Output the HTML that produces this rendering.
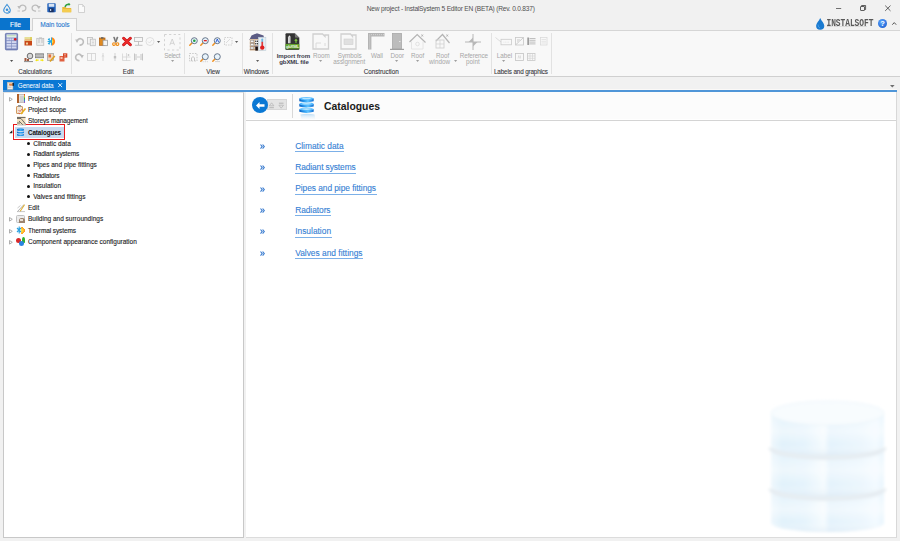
<!DOCTYPE html>
<html><head><meta charset="utf-8">
<style>
*{margin:0;padding:0;box-sizing:border-box}
html,body{width:900px;height:541px;overflow:hidden;background:#f1f1f1;font-family:"Liberation Sans",sans-serif;position:relative}
.a{position:absolute}
.t{position:absolute;white-space:nowrap;line-height:1}
svg{position:absolute;overflow:visible}
</style></head><body>

<div class="t" style="left:366.7px;top:5.77px;font-size:6.6px;color:#505050;font-weight:normal;letter-spacing:-0.2px">New project - InstalSystem 5 Editor EN (BETA) (Rev. 0.0.837)</div>
<svg style="left:835px;top:4px" width="60" height="9"><path d="M1 4.5H6.2" stroke="#444" stroke-width="0.75"/><rect x="25.5" y="2.5" width="4" height="4" rx="0.4" fill="none" stroke="#3a3a3a" stroke-width="0.8"/><path d="M26.6 2.3V1.5H30.6V5.5H29.7" fill="none" stroke="#3a3a3a" stroke-width="0.8"/><path d="M50.2 1.6L55.5 6.9M55.5 1.6L50.2 6.9" stroke="#333" stroke-width="0.75"/></svg>
<div class="a" style="left:0;top:18px;width:30px;height:12.5px;background:#0a74cd"></div>
<div class="t" style="left:10px;top:21.87px;font-size:6.6px;color:#ffffff;font-weight:normal;-webkit-text-stroke:0.12px #ffffff;letter-spacing:0.1px">File</div>
<div class="a" style="left:32px;top:18px;width:45px;height:13px;background:#f8f8f8;border:1px solid #d2d2d2;border-bottom:none"></div>
<div class="t" style="left:40.3px;top:21.77px;font-size:6.6px;color:#2a78d0;font-weight:normal;-webkit-text-stroke:0.1px #2a78d0;letter-spacing:-0.08px">Main tools</div>
<div class="a" style="left:0;top:30px;width:900px;height:47px;background:#f8f8f8;border-top:1px solid #d6d6d6;border-bottom:1px solid #d0d0d0"></div>
<div class="a" style="left:33px;top:30px;width:43px;height:1.5px;background:#f8f8f8"></div>
<div class="a" style="left:71.2px;top:33px;width:1px;height:41px;background:#e2e2e2"></div>
<div class="a" style="left:184.2px;top:33px;width:1px;height:41px;background:#e2e2e2"></div>
<div class="a" style="left:241.5px;top:33px;width:1px;height:41px;background:#e2e2e2"></div>
<div class="a" style="left:271.5px;top:33px;width:1px;height:41px;background:#e2e2e2"></div>
<div class="a" style="left:491px;top:33px;width:1px;height:41px;background:#e2e2e2"></div>
<div class="a" style="left:551.3px;top:33px;width:1px;height:41px;background:#e2e2e2"></div>
<div class="a" style="left:3px;top:80px;width:63px;height:11px;background:#0a78d4"></div>
<div class="t" style="left:17.8px;top:82.66px;font-size:6.4px;color:#ffffff;font-weight:normal;letter-spacing:-0.1px">General data</div>
<svg style="left:58px;top:83.4px" width="4.3" height="4.3"><path d="M0.2 0.2L4.1 4.1M4.1 0.2L0.2 4.1" stroke="#fff" stroke-width="0.85"/></svg>
<div class="a" style="left:66px;top:89px;width:831px;height:1px;background:#fbf9f7"></div>
<div class="a" style="left:3px;top:90px;width:894px;height:2px;background:#5096d8"></div>
<svg style="left:890.2px;top:85.1px" width="4.6" height="2.4"><path d="M0 0H4.6L2.3 2.4Z" fill="#6e6e6e"/></svg>
<div class="a" style="left:3px;top:92px;width:241px;height:446px;background:#fff;border:1px solid #c8c8c8;border-top:1px solid #e4e4e4"></div>
<div class="a" style="left:246px;top:92px;width:651px;height:446px;background:#fff;border-right:1px solid #d8d8d8;border-bottom:1px solid #dcdcdc"></div>
<div class="a" style="left:246px;top:92px;width:650px;height:27px;background:#fcfcfc"></div>
<div class="a" style="left:246px;top:120px;width:650px;height:1px;background:#d4d4d4"></div>
<div class="a" style="left:15px;top:126.5px;width:48.5px;height:11px;background:#c8daee"></div>
<div class="a" style="left:13px;top:124px;width:52px;height:15.5px;border:1.6px solid #e8191c"></div>
<div class="t" style="left:28px;top:96.22px;font-size:6.5px;color:#1c1c24;font-weight:normal;-webkit-text-stroke:0.12px #1c1c24;letter-spacing:0px">Project info</div>
<svg style="left:9px;top:97.2px" width="4" height="5"><path d="M0.5 0.5L3.3 2.3L0.5 4.1Z" fill="none" stroke="#9a9a9a" stroke-width="0.8"/></svg>
<div class="t" style="left:28px;top:107.22px;font-size:6.5px;color:#1c1c24;font-weight:normal;-webkit-text-stroke:0.12px #1c1c24;letter-spacing:-0.1px">Project scope</div>
<div class="t" style="left:28px;top:118.41px;font-size:6.5px;color:#1c1c24;font-weight:normal;-webkit-text-stroke:0.12px #1c1c24;letter-spacing:-0.12px">Storeys management</div>
<div class="t" style="left:28px;top:129.81px;font-size:6.3px;color:#111;font-weight:bold;letter-spacing:-0.1px">Catalogues</div>
<svg style="left:9px;top:129.9px" width="4" height="4"><path d="M3.3 0.2V3.3H0.2Z" fill="#222"/></svg>
<div class="t" style="left:28px;top:204.91px;font-size:6.5px;color:#1c1c24;font-weight:normal;-webkit-text-stroke:0.12px #1c1c24;letter-spacing:0px">Edit</div>
<div class="t" style="left:28px;top:216.12px;font-size:6.5px;color:#1c1c24;font-weight:normal;-webkit-text-stroke:0.12px #1c1c24;letter-spacing:0px">Building and surroundings</div>
<svg style="left:9px;top:217.1px" width="4" height="5"><path d="M0.5 0.5L3.3 2.3L0.5 4.1Z" fill="none" stroke="#9a9a9a" stroke-width="0.8"/></svg>
<div class="t" style="left:28px;top:227.51px;font-size:6.5px;color:#1c1c24;font-weight:normal;-webkit-text-stroke:0.12px #1c1c24;letter-spacing:-0.11px">Thermal systems</div>
<svg style="left:9px;top:228.5px" width="4" height="5"><path d="M0.5 0.5L3.3 2.3L0.5 4.1Z" fill="none" stroke="#9a9a9a" stroke-width="0.8"/></svg>
<div class="t" style="left:28px;top:238.62px;font-size:6.5px;color:#1c1c24;font-weight:normal;-webkit-text-stroke:0.12px #1c1c24;letter-spacing:0px">Component appearance configuration</div>
<svg style="left:9px;top:239.6px" width="4" height="5"><path d="M0.5 0.5L3.3 2.3L0.5 4.1Z" fill="none" stroke="#9a9a9a" stroke-width="0.8"/></svg>
<div class="a" style="left:27.3px;top:142.2px;width:3.1px;height:3.1px;border-radius:50%;background:#111"></div>
<div class="t" style="left:33.2px;top:140.62px;font-size:6.5px;color:#1c1c24;font-weight:normal;-webkit-text-stroke:0.12px #1c1c24;letter-spacing:0px">Climatic data</div>
<div class="a" style="left:27.3px;top:152.6px;width:3.1px;height:3.1px;border-radius:50%;background:#111"></div>
<div class="t" style="left:33.2px;top:151.01px;font-size:6.5px;color:#1c1c24;font-weight:normal;-webkit-text-stroke:0.12px #1c1c24;letter-spacing:-0.14px">Radiant systems</div>
<div class="a" style="left:27.3px;top:163.6px;width:3.1px;height:3.1px;border-radius:50%;background:#111"></div>
<div class="t" style="left:33.2px;top:162.01px;font-size:6.5px;color:#1c1c24;font-weight:normal;-webkit-text-stroke:0.12px #1c1c24;letter-spacing:0px">Pipes and pipe fittings</div>
<div class="a" style="left:27.3px;top:174.1px;width:3.1px;height:3.1px;border-radius:50%;background:#111"></div>
<div class="t" style="left:33.2px;top:172.51px;font-size:6.5px;color:#1c1c24;font-weight:normal;-webkit-text-stroke:0.12px #1c1c24;letter-spacing:-0.2px">Radiators</div>
<div class="a" style="left:27.3px;top:184.7px;width:3.1px;height:3.1px;border-radius:50%;background:#111"></div>
<div class="t" style="left:33.2px;top:183.12px;font-size:6.5px;color:#1c1c24;font-weight:normal;-webkit-text-stroke:0.12px #1c1c24;letter-spacing:0px">Insulation</div>
<div class="a" style="left:27.3px;top:195.4px;width:3.1px;height:3.1px;border-radius:50%;background:#111"></div>
<div class="t" style="left:33.2px;top:193.81px;font-size:6.5px;color:#1c1c24;font-weight:normal;-webkit-text-stroke:0.12px #1c1c24;letter-spacing:0px">Valves and fittings</div>
<div class="a" style="left:17px;top:94px;width:8px;height:8.6px;background:#e8e4e0;border:1px solid #c7c2bc"></div>
<div class="a" style="left:17px;top:94px;width:2px;height:8.6px;background:#b0602a"></div>
<div class="a" style="left:19.5px;top:95.5px;width:4px;height:6px;background:#d0d0d0"></div>
<div class="a" style="left:24px;top:94px;width:1px;height:8.6px;background:linear-gradient(#e03030,#f0c020,#30b040,#3080e0,#c040c0)"></div>
<div class="a" style="left:16px;top:106.1px;width:7px;height:7.6px;background:#f3e6d4;border:1px solid #d29a60;border-radius:1px"></div>
<div class="a" style="left:18px;top:105.3px;width:3px;height:1.6px;background:#999"></div>
<svg style="left:16.5px;top:106.8px" width="9" height="8"><path d="M1.5 3L3 4.5L5 2M1.5 6L3 7" stroke="#d04040" stroke-width="0.7" fill="none"/><path d="M4 7L8.5 1.5" stroke="#e8b020" stroke-width="1.6"/></svg>
<svg style="left:16.5px;top:116.4px" width="9" height="9"><rect x="0" y="0.5" width="8.5" height="8.5" fill="#f0e0c0"/><path d="M0 1.5L8.5 1.5M0 2.5L4 2.5L8.5 8M2 5L6 9M0 7H3" stroke="#505050" stroke-width="0.8" fill="none"/><path d="M0 9H9" stroke="#aaa" stroke-width="0.7"/></svg>
<svg style="left:17.3px;top:128.3px" width="7" height="8.5" viewBox="0 0 7 8.5"><defs><linearGradient id="tdb" x1="0" x2="1"><stop offset="0" stop-color="#0b6bd0"/><stop offset="0.5" stop-color="#3aaaf2"/><stop offset="1" stop-color="#1480e0"/></linearGradient></defs><path d="M0 0.9Q3.5 -0.5 7 0.9V2.4Q3.5 3.6 0 2.4Z" fill="url(#tdb)"/><path d="M0 3.5Q3.5 4.7 7 3.5V5Q3.5 6.2 0 5Z" fill="url(#tdb)"/><path d="M0 6.1Q3.5 7.3 7 6.1V7.4Q3.5 8.8 0 7.4Z" fill="url(#tdb)"/></svg>
<svg style="left:17px;top:204px" width="8" height="8"><path d="M0.5 7.5L7 0.5" stroke="#9a9a9a" stroke-width="0.8"/><path d="M3 7.5L7.5 0.8" stroke="#e0b030" stroke-width="1.1"/><path d="M0.5 4L3.5 1.5M0 7.6H8" stroke="#b0b0b0" stroke-width="0.7"/></svg>
<div class="a" style="left:16.3px;top:214.6px;width:8.7px;height:8.9px;background:#ececec;border:1px solid #c0c0c0;border-radius:1.5px"></div>
<div class="a" style="left:18.6px;top:217.6px;width:6px;height:5.5px;background:#9c8470;border-radius:2.5px 2.5px 0 0"></div>
<div class="a" style="left:20.4px;top:219.1px;width:2.5px;height:2px;background:#e8e0d8"></div>
<div class="a" style="left:20.5px;top:226.5px;width:4px;height:7.6px;background:radial-gradient(circle at 0% 50%,#ffe040 20%,#ff9a20 70%,#fff0 72%)"></div>
<svg style="left:17px;top:226.2px" width="5" height="8"><path d="M2.2 0.5V7.5M0 2L4 6M0 6L4 2" stroke="#2aa0e0" stroke-width="1.1"/></svg>
<div class="a" style="left:16px;top:237.8px;width:5px;height:5px;background:#d82a2a;border-radius:50%"></div>
<div class="a" style="left:21.5px;top:237.3px;width:3px;height:6px;background:#30b030;border-radius:50% 50% 20% 20%"></div>
<div class="a" style="left:18.5px;top:240.8px;width:5.5px;height:5px;background:#2a84e0;border-radius:50%"></div>
<div class="a" style="left:267px;top:99.2px;width:20px;height:11px;background:#e4e4e4;border:1px solid #d6d6d6"></div>
<svg style="left:269px;top:101.5px" width="16" height="7"><path d="M2.6 0.8L4.9 3.8H0.3Z" fill="none" stroke="#b4b4b4" stroke-width="0.75"/><path d="M0.3 5.7H4.9" stroke="#b4b4b4" stroke-width="1"/><path d="M12.2 6.2L14.5 3.2H9.9Z" fill="none" stroke="#b4b4b4" stroke-width="0.75"/><path d="M9.9 1.2H14.5" stroke="#b4b4b4" stroke-width="1"/></svg>
<div class="a" style="left:252px;top:97px;width:16px;height:16px;background:#0a78d4;border-radius:50%"></div>
<svg style="left:254.6px;top:100.6px" width="11" height="9"><path d="M1 4.5L4.5 1V3.3H9.5V5.7H4.5V8Z" fill="#fff"/></svg>
<div class="a" style="left:292px;top:94px;width:1px;height:24px;background:#d8d8d8"></div>
<div class="t" style="left:324px;top:101.90px;font-size:10.4px;color:#1a1a1a;font-weight:bold;">Catalogues</div>
<svg style="left:299px;top:96.7px" width="17" height="25" viewBox="0 0 17 25"><defs><linearGradient id="hdb" x1="0" x2="1"><stop offset="0" stop-color="#0a5ec0"/><stop offset="0.35" stop-color="#2a9cf0"/><stop offset="0.6" stop-color="#60c4ff"/><stop offset="1" stop-color="#0c6ad0"/></linearGradient><linearGradient id="hrf" x1="0" x2="0" y1="0" y2="1"><stop offset="0" stop-color="#a8d4f4"/><stop offset="1" stop-color="#ffffff" stop-opacity="0"/></linearGradient></defs><path d="M0.3 12.2V14.8Q7.5 17.0 14.7 14.8V12.2Z" fill="url(#hdb)"/><ellipse cx="7.5" cy="12.2" rx="7.2" ry="1.5" fill="#58bcff"/><ellipse cx="7.5" cy="12.1" rx="4.5" ry="0.8" fill="#b8e6ff"/><path d="M0.3 6.9V9.5Q7.5 11.7 14.7 9.5V6.9Z" fill="url(#hdb)"/><ellipse cx="7.5" cy="6.9" rx="7.2" ry="1.5" fill="#58bcff"/><ellipse cx="7.5" cy="6.8" rx="4.5" ry="0.8" fill="#b8e6ff"/><path d="M0.3 1.6V4.2Q7.5 6.4 14.7 4.2V1.6Z" fill="url(#hdb)"/><ellipse cx="7.5" cy="1.6" rx="7.2" ry="1.5" fill="#58bcff"/><ellipse cx="7.5" cy="1.5" rx="4.5" ry="0.8" fill="#b8e6ff"/><path d="M1.5 17.5Q8 16 15.5 17.5L16.5 24H2.5Z" fill="url(#hrf)" opacity="0.8"/></svg>
<svg style="left:259.8px;top:143.8px" width="5" height="5.2"><path d="M0.5 0.5L2.2 2.6L0.5 4.7M2.6 0.5L4.3 2.6L2.6 4.7" stroke="#3d7ed0" stroke-width="1.1" fill="none"/></svg>
<div class="t" style="left:295.2px;top:141.58px;font-size:8.4px;color:#3480d4;font-weight:normal;-webkit-text-stroke:0.1px #3480d4;letter-spacing:0px">Climatic data</div>
<svg style="left:259.8px;top:165.2px" width="5" height="5.2"><path d="M0.5 0.5L2.2 2.6L0.5 4.7M2.6 0.5L4.3 2.6L2.6 4.7" stroke="#3d7ed0" stroke-width="1.1" fill="none"/></svg>
<div class="t" style="left:295.2px;top:162.98px;font-size:8.4px;color:#3480d4;font-weight:normal;-webkit-text-stroke:0.1px #3480d4;letter-spacing:-0.1px">Radiant systems</div>
<svg style="left:259.8px;top:186.6px" width="5" height="5.2"><path d="M0.5 0.5L2.2 2.6L0.5 4.7M2.6 0.5L4.3 2.6L2.6 4.7" stroke="#3d7ed0" stroke-width="1.1" fill="none"/></svg>
<div class="t" style="left:295.2px;top:184.38px;font-size:8.4px;color:#3480d4;font-weight:normal;-webkit-text-stroke:0.1px #3480d4;letter-spacing:-0.05px">Pipes and pipe fittings</div>
<svg style="left:259.8px;top:208.0px" width="5" height="5.2"><path d="M0.5 0.5L2.2 2.6L0.5 4.7M2.6 0.5L4.3 2.6L2.6 4.7" stroke="#3d7ed0" stroke-width="1.1" fill="none"/></svg>
<div class="t" style="left:295.2px;top:205.78px;font-size:8.4px;color:#3480d4;font-weight:normal;-webkit-text-stroke:0.1px #3480d4;letter-spacing:-0.06px">Radiators</div>
<svg style="left:259.8px;top:229.4px" width="5" height="5.2"><path d="M0.5 0.5L2.2 2.6L0.5 4.7M2.6 0.5L4.3 2.6L2.6 4.7" stroke="#3d7ed0" stroke-width="1.1" fill="none"/></svg>
<div class="t" style="left:295.2px;top:227.18px;font-size:8.4px;color:#3480d4;font-weight:normal;-webkit-text-stroke:0.1px #3480d4;letter-spacing:0px">Insulation</div>
<svg style="left:259.8px;top:250.8px" width="5" height="5.2"><path d="M0.5 0.5L2.2 2.6L0.5 4.7M2.6 0.5L4.3 2.6L2.6 4.7" stroke="#3d7ed0" stroke-width="1.1" fill="none"/></svg>
<div class="t" style="left:295.2px;top:248.58px;font-size:8.4px;color:#3480d4;font-weight:normal;-webkit-text-stroke:0.1px #3480d4;letter-spacing:0px">Valves and fittings</div>
<div class="a" style="left:295.2px;top:151.2px;width:48.4px;height:1px;background:#7cb0e8"></div>
<div class="a" style="left:295.2px;top:172.6px;width:60.5px;height:1px;background:#7cb0e8"></div>
<div class="a" style="left:295.2px;top:194.0px;width:82px;height:1px;background:#7cb0e8"></div>
<div class="a" style="left:295.2px;top:215.4px;width:35.4px;height:1px;background:#7cb0e8"></div>
<div class="a" style="left:295.2px;top:236.8px;width:36.7px;height:1px;background:#7cb0e8"></div>
<div class="a" style="left:295.2px;top:258.2px;width:67.8px;height:1px;background:#7cb0e8"></div>
<svg style="left:765px;top:395px" width="126" height="142" viewBox="0 0 126 142">
<defs>
<linearGradient id="bg1" x1="0" x2="1" y1="0" y2="0">
<stop offset="0" stop-color="#eef7fd"/><stop offset="0.1" stop-color="#e0f1fb"/><stop offset="0.3" stop-color="#e4f3fc"/><stop offset="0.47" stop-color="#f5fbfe"/><stop offset="0.52" stop-color="#e3f2fc"/><stop offset="0.8" stop-color="#ebf6fd"/><stop offset="0.93" stop-color="#f3faff"/><stop offset="1" stop-color="#e8f5fd"/>
</linearGradient>
<linearGradient id="vg" x1="0" x2="0" y1="0" y2="1">
<stop offset="0" stop-color="#ffffff" stop-opacity="0"/><stop offset="0.45" stop-color="#ffffff" stop-opacity="0.45"/><stop offset="0.75" stop-color="#ffffff" stop-opacity="0"/><stop offset="1" stop-color="#dbe9f3" stop-opacity="0.6"/>
</linearGradient>
<filter id="bl" x="-10%" y="-10%" width="120%" height="120%"><feGaussianBlur stdDeviation="1.8"/></filter>
</defs>
<g filter="url(#bl)">
<path d="M6 96 V128 A56.5 9 0 0 0 119 128 V96 Z" fill="url(#bg1)"/>
<path d="M6 96 V128 A56.5 9 0 0 0 119 128 V96 Z" fill="url(#vg)"/>
<path d="M6 93.5 A56.5 10 0 0 0 119 93.5" fill="none" stroke="#e6edf2" stroke-width="5"/>
<path d="M6 54 V91 A56.5 10 0 0 0 119 91 V54 Z" fill="url(#bg1)"/>
<path d="M6 54 V91 A56.5 10 0 0 0 119 91 V54 Z" fill="url(#vg)"/>
<path d="M6 52.5 A56.5 10 0 0 0 119 52.5" fill="none" stroke="#e6edf2" stroke-width="5"/>
<path d="M6 17 V50 A56.5 10 0 0 0 119 50 V17 Z" fill="url(#bg1)"/>
<path d="M6 17 V50 A56.5 10 0 0 0 119 50 V17 Z" fill="url(#vg)"/>
<ellipse cx="62.5" cy="18" rx="56.5" ry="12" fill="#f8fcfe" stroke="#eef6fb" stroke-width="1"/>
</g>
</svg>
<div class="t" style="left:18.3px;top:69.21px;font-size:6.3px;color:#383840;font-weight:normal;-webkit-text-stroke:0.1px #383840;letter-spacing:-0.06px">Calculations</div>
<div class="t" style="left:122.8px;top:69.21px;font-size:6.3px;color:#383840;font-weight:normal;-webkit-text-stroke:0.1px #383840;">Edit</div>
<div class="t" style="left:206.3px;top:69.21px;font-size:6.3px;color:#383840;font-weight:normal;-webkit-text-stroke:0.1px #383840;">View</div>
<div class="t" style="left:243.7px;top:69.21px;font-size:6.3px;color:#383840;font-weight:normal;-webkit-text-stroke:0.1px #383840;letter-spacing:-0.05px">Windows</div>
<div class="t" style="left:363.7px;top:69.21px;font-size:6.3px;color:#383840;font-weight:normal;-webkit-text-stroke:0.1px #383840;letter-spacing:-0.03px">Construction</div>
<div class="t" style="left:494px;top:69.21px;font-size:6.3px;color:#383840;font-weight:normal;-webkit-text-stroke:0.1px #383840;letter-spacing:-0.13px">Labels and graphics</div>
<svg style="left:5px;top:33px" width="13" height="17.3" viewBox="0 0 13 17.3"><rect x="0.4" y="0.4" width="12.2" height="16.5" rx="0.8" fill="#7f8cc0" stroke="#606ea8" stroke-width="0.8"/><rect x="1.6" y="1.5" width="9.8" height="3" fill="#f6f8f4"/><path d="M2.2 2.8H10.8" stroke="#90c890" stroke-width="0.7"/><g fill="#d2d8f0"><rect x="1.6" y="5.4" width="2.3" height="1.9"/><rect x="4.3" y="5.4" width="2.3" height="1.9"/><rect x="7" y="5.4" width="1.8" height="1.9"/><rect x="1.6" y="8.1" width="4.6" height="1.9"/><rect x="6.8" y="8.1" width="4.6" height="1.9"/><rect x="1.6" y="10.8" width="4.6" height="1.9"/><rect x="6.8" y="10.8" width="4.6" height="1.9"/><rect x="1.6" y="13.5" width="4.6" height="1.9"/><rect x="6.8" y="13.5" width="4.6" height="1.9"/></g><circle cx="10.2" cy="6.3" r="1.2" fill="#e01818"/></svg>
<svg style="left:10.0px;top:59.8px" width="3.2" height="2"><path d="M0 0H3.2L1.6 2Z" fill="#505050"/></svg>
<svg style="left:24px;top:37px" width="8.5" height="8.5" viewBox="0 0 8.5 8.5"><rect x="0.5" y="3.5" width="7.5" height="5" fill="#c84818"/><rect x="0.5" y="2" width="7.5" height="2" fill="#e8c080"/><path d="M0.5 1H8M7 0V3" stroke="#d0c020" stroke-width="0.9"/><rect x="2" y="5.5" width="2" height="2" fill="#f0d0a0"/></svg>
<svg style="left:35.5px;top:37px" width="8.5" height="8.5" viewBox="0 0 8.5 8.5"><rect x="0.8" y="1.3" width="7" height="7" fill="#ececec" stroke="#b8b8b8" stroke-width="0.7"/><path d="M2 3H4M2 5H4M5 3H7M5 5H7M3 0.8H6" stroke="#aaa" stroke-width="0.6"/></svg>
<svg style="left:47px;top:37px" width="9" height="9" viewBox="0 0 9 9"><path d="M4.6 0.2A4.4 4.4 0 0 1 4.6 8.8Z" fill="#ff8a1a"/><path d="M4.6 2.2A2.3 2.3 0 0 1 4.6 6.6Z" fill="#ffe640"/><path d="M4.5 0.6V8.2M4.5 4.4L1 2.2M4.5 4.4L1 6.6M4.5 4.4H0.6M2 1.2L2.6 2.9M2 7.6L2.6 5.9" stroke="#28a8e0" stroke-width="1.05"/></svg>
<svg style="left:23.5px;top:53px" width="9" height="9" viewBox="0 0 9 9"><circle cx="6" cy="3" r="2.8" fill="#d8d8d8" stroke="#505050" stroke-width="0.8"/><rect x="0.5" y="5" width="2" height="3" fill="#a05a40"/><rect x="3" y="6" width="2" height="2" fill="#a05a40"/><path d="M0 8.6H9" stroke="#707070" stroke-width="0.8"/></svg>
<svg style="left:35px;top:53px" width="9" height="9" viewBox="0 0 9 9"><rect x="0.3" y="0.8" width="8.4" height="4" fill="#b0b0b0" stroke="#707070" stroke-width="0.6"/><path d="M0.3 2.8H8.7" stroke="#d8d8d8" stroke-width="0.5"/><path d="M1.2 7.2H3.6M5.4 7.2H7.8" stroke="#f4e400" stroke-width="1.3"/><path d="M0.2 7.2L1.8 5.9V8.5ZM8.8 7.2L7.2 5.9V8.5Z" fill="#f4e400"/></svg>
<svg style="left:47px;top:53px" width="8.5" height="9" viewBox="0 0 8.5 9"><rect x="0.5" y="0.5" width="6" height="7" fill="#f0d8c0" stroke="#909090" stroke-width="0.6"/><rect x="1.5" y="1.5" width="2.5" height="3" fill="#e07040"/><path d="M3 8.5L7.8 3" stroke="#e0a020" stroke-width="1.6"/></svg>
<svg style="left:59px;top:53px" width="8.5" height="9" viewBox="0 0 8.5 9"><rect x="0.5" y="3" width="5" height="5.5" fill="#e06040"/><rect x="4" y="0.3" width="4.3" height="4.3" fill="#d84828"/><rect x="1.5" y="4" width="2" height="2" fill="#f4c0b0"/><path d="M5 1.5H7M5 3H7" stroke="#f4c0b0" stroke-width="0.6"/></svg>
<svg style="left:75px;top:37px" width="9" height="9" viewBox="0 0 9 9"><path d="M2 4.5A3.2 3.2 0 1 1 4.5 8" fill="none" stroke="#bdbdbd" stroke-width="1.6"/><path d="M0.2 2.5L3.8 2.5L2 6Z" fill="#bdbdbd"/></svg>
<svg style="left:87px;top:37px" width="9" height="9" viewBox="0 0 9 9"><rect x="0.5" y="0.5" width="5" height="6.5" fill="#f4f4f4" stroke="#bdbdbd" stroke-width="0.8"/><rect x="3.3" y="2.2" width="5" height="6.5" fill="#f4f4f4" stroke="#bdbdbd" stroke-width="0.8"/><path d="M4.8 4H7M4.8 5.5H7M4.8 7H7" stroke="#bdbdbd" stroke-width="0.5"/></svg>
<svg style="left:99px;top:37px" width="9" height="9" viewBox="0 0 9 9"><rect x="0.5" y="1" width="5.5" height="7.3" fill="#e08a20" stroke="#a85a10" stroke-width="0.7"/><rect x="2" y="0.2" width="2.5" height="1.5" fill="#606060"/><rect x="4" y="3.2" width="4.5" height="5.5" fill="#f4f4f4" stroke="#909090" stroke-width="0.7"/></svg>
<svg style="left:112px;top:37px" width="7.5" height="9" viewBox="0 0 7.5 9"><path d="M1.5 0.2L3.4 5.2L3.9 5.2L2.6 0.2ZM6 0.2L4.1 5.2L3.6 5.2L4.9 0.2Z" fill="#6a6a6a" stroke="#6a6a6a" stroke-width="0.6"/><circle cx="2" cy="7.1" r="1.35" fill="none" stroke="#f08a10" stroke-width="1.1"/><circle cx="5.5" cy="7.1" r="1.35" fill="none" stroke="#f08a10" stroke-width="1.1"/></svg>
<svg style="left:122px;top:37px" width="10" height="9" viewBox="0 0 10 9"><path d="M1.6 1.2L8.4 7.8M8.4 1.2L1.6 7.8" stroke="#b80c10" stroke-width="2.9" stroke-linecap="round"/><path d="M1.6 1.2L8.4 7.8M8.4 1.2L1.6 7.8" stroke="#ec2a2a" stroke-width="1.9" stroke-linecap="round"/></svg>
<svg style="left:134px;top:37px" width="9" height="9" viewBox="0 0 9 9"><rect x="0.5" y="0.5" width="8" height="4" fill="#f6f6f6" stroke="#b8b8b8" stroke-width="0.8"/><path d="M4.5 4.5V8M1 8.3H8.5" stroke="#b8b8b8" stroke-width="0.8"/></svg>
<svg style="left:145px;top:37px" width="10" height="9" viewBox="0 0 10 9"><circle cx="5" cy="4.5" r="4" fill="none" stroke="#dcdcdc" stroke-width="0.9"/><path d="M3 4.5L4.5 6L7 3" stroke="#dcdcdc" stroke-width="0.8" fill="none"/></svg>
<svg style="left:156.9px;top:40.5px" width="3.2" height="2"><path d="M0 0H3.2L1.6 2Z" fill="#606060"/></svg>
<svg style="left:163.8px;top:33.5px" width="16.5" height="16.5" viewBox="0 0 16.5 16.5"><rect x="0.5" y="0.5" width="15.5" height="15.5" fill="none" stroke="#c8c8c8" stroke-width="0.8" stroke-dasharray="2.2 2.4"/><path d="M5.8 11.2L8.2 5L10.6 11.2M6.7 9.3H9.7" stroke="#b8b8b8" stroke-width="0.55" fill="none"/></svg>
<div class="t" style="left:164.2px;top:52.91px;font-size:6.3px;color:#a6a6a6;font-weight:normal;letter-spacing:-0.25px">Select</div>
<svg style="left:170.7px;top:59.8px" width="3.2" height="2"><path d="M0 0H3.2L1.6 2Z" fill="#a0a0a0"/></svg>
<svg style="left:75px;top:53.3px" width="9" height="8" viewBox="0 0 9 8"><path d="M7 4A3.2 3.2 0 1 0 4.5 7.5" fill="none" stroke="#bdbdbd" stroke-width="1.6"/><path d="M8.8 2L5.2 2L7 5.5Z" fill="#bdbdbd"/></svg>
<svg style="left:87px;top:53.3px" width="9" height="8" viewBox="0 0 9 8"><rect x="0.5" y="0.5" width="8" height="7" fill="none" stroke="#d0d0d0" stroke-width="0.8"/><path d="M4.5 0.5V7.5" stroke="#d0d0d0" stroke-width="0.8"/></svg>
<svg style="left:101px;top:53.3px" width="4" height="8" viewBox="0 0 4 8"><path d="M2 0V8M0.8 3.5L2 2.5L3.2 3.5" stroke="#cfcfcf" stroke-width="0.8" fill="none"/></svg>
<svg style="left:113px;top:53.3px" width="4" height="8" viewBox="0 0 4 8"><path d="M2 0V8" stroke="#c8c8c8" stroke-width="0.8"/><rect x="0.8" y="3" width="2.4" height="2.4" fill="#c0c0c0"/></svg>
<svg style="left:122px;top:53.3px" width="9" height="8" viewBox="0 0 9 8"><path d="M0.5 4H8.5M4.5 0V8M0.5 0.5V7.5H8.5" stroke="#d4d4d4" stroke-width="0.8" fill="none"/><path d="M5.5 2H7.5M6.5 1V3" stroke="#c0c0c0" stroke-width="0.7"/></svg>
<svg style="left:134px;top:53.3px" width="9" height="8" viewBox="0 0 9 8"><path d="M0.5 0.5V7.5M8.5 0.5V7.5M2 1V7M7 1V7" stroke="#b8b8b8" stroke-width="0.8"/><path d="M3 4H6" stroke="#c4c4c4" stroke-width="0.8"/></svg>
<svg style="left:188.7px;top:37.2px" width="9" height="9" viewBox="0 0 9 9"><path d="M0.8 8.2L3.2 5.8" stroke="#f09020" stroke-width="1.5" stroke-linecap="round"/><circle cx="5.3" cy="3.7" r="3" fill="#e8f4fc" stroke="#5a6a80" stroke-width="0.9"/><circle cx="5.3" cy="3.7" r="1.3" fill="#20a040"/></svg>
<svg style="left:200.3px;top:37.2px" width="9" height="9" viewBox="0 0 9 9"><path d="M0.8 8.2L3.2 5.8" stroke="#f09020" stroke-width="1.5" stroke-linecap="round"/><circle cx="5.3" cy="3.7" r="3" fill="#e8f4fc" stroke="#5a6a80" stroke-width="0.9"/><rect x="3.8" y="3" width="3" height="1.3" fill="#e02020"/></svg>
<svg style="left:212px;top:37.2px" width="9" height="9" viewBox="0 0 9 9"><path d="M0.8 8.2L3.2 5.8" stroke="#f09020" stroke-width="1.5" stroke-linecap="round"/><circle cx="5.3" cy="3.7" r="3" fill="#e8f4fc" stroke="#5a6a80" stroke-width="0.9"/><path d="M3.9 5.3L5.3 2L6.7 5.3" stroke="#2050d0" stroke-width="0.9" fill="none"/></svg>
<svg style="left:224px;top:37.2px" width="8.5" height="8.5" viewBox="0 0 8.5 8.5"><rect x="0.5" y="0.5" width="7.5" height="7.5" fill="none" stroke="#c8c8c8" stroke-width="0.8" stroke-dasharray="1.5 1"/><path d="M2 6L6 2" stroke="#d0d0d0" stroke-width="0.7"/></svg>
<svg style="left:234.7px;top:40.5px" width="3.2" height="2"><path d="M0 0H3.2L1.6 2Z" fill="#606060"/></svg>
<svg style="left:189px;top:53px" width="8.5" height="9" viewBox="0 0 8.5 9"><rect x="0.5" y="0.5" width="7.5" height="7.5" fill="none" stroke="#bdbdbd" stroke-width="0.8" stroke-dasharray="1.5 1.2"/><path d="M2.5 8V5L4 3.5L5.5 5V8" stroke="#b0b0b0" stroke-width="0.7" fill="none"/></svg>
<svg style="left:200.3px;top:53px" width="9" height="9" viewBox="0 0 9 9"><path d="M0.8 8.2L3.2 5.8" stroke="#f09020" stroke-width="1.5" stroke-linecap="round"/><circle cx="5.3" cy="3.7" r="3" fill="#e8f4fc" stroke="#5a6a80" stroke-width="0.9"/><path d="M1.5 8.7H8.5" stroke="#bbb" stroke-width="0.6" stroke-dasharray="1 0.8"/></svg>
<svg style="left:212px;top:53px" width="9" height="9" viewBox="0 0 9 9"><path d="M0.8 8.2L3.2 5.8" stroke="#f09020" stroke-width="1.5" stroke-linecap="round"/><circle cx="5.3" cy="3.7" r="3" fill="#e8f4fc" stroke="#5a6a80" stroke-width="0.9"/><path d="M3 8.6H8" stroke="#bbb" stroke-width="0.6"/></svg>
<svg style="left:249px;top:33px" width="17.5" height="18" viewBox="0 0 17.5 18"><path d="M0.3 7L2.5 2.5L8 0.2L14.5 2.5L15.5 7Z" fill="#5c5c84"/><rect x="0.8" y="6" width="13.5" height="11.6" fill="#d9bfa2"/><path d="M0.8 10H6M0.8 13.2H6M0.8 16.5H6" stroke="#a88060" stroke-width="0.7"/><g fill="#f4f4f4" stroke="#808080" stroke-width="0.4"><rect x="1.8" y="7.2" width="3" height="2"/><rect x="1.8" y="10.7" width="3" height="2"/><rect x="1.8" y="14" width="3" height="2"/></g><rect x="6" y="7" width="3.5" height="5" fill="#f0f0f0"/><g fill="#222"><circle cx="6.8" cy="8.3" r="0.7"/><circle cx="8.6" cy="8.3" r="0.7"/><circle cx="6.8" cy="10.8" r="0.7"/><circle cx="8.6" cy="10.8" r="0.7"/></g><rect x="6.3" y="13.8" width="2.6" height="3.8" fill="#1a1010"/><path d="M5.5 13.3H10" stroke="#505070" stroke-width="0.8"/><rect x="9.3" y="4.2" width="7.6" height="13.4" fill="#e6eef3" stroke="#b8c8d4" stroke-width="0.5"/><rect x="12.4" y="5.5" width="1.7" height="4" rx="0.8" fill="#70b8e0"/><rect x="12.4" y="8.8" width="1.7" height="5" fill="#e03a3a"/><circle cx="13.25" cy="14.6" r="2.2" fill="#e02020"/></svg>
<svg style="left:255.7px;top:59.8px" width="3.2" height="2"><path d="M0 0H3.2L1.6 2Z" fill="#606060"/></svg>
<svg style="left:285.3px;top:33px" width="14.6" height="17" viewBox="0 0 14.6 17"><path d="M0.5 1.3Q0.5 0.3 1.5 0.3H9.8L14.3 4.8V15.8Q14.3 16.8 13.3 16.8H1.5Q0.5 16.8 0.5 15.8Z" fill="#333"/><path d="M9.8 0.3L10 4.6L14.3 4.8Z" fill="#777"/><rect x="0.5" y="10.9" width="13.8" height="5.2" fill="#64a32c"/><path d="M0.5 16.1H14.3" stroke="#2a3a1a" stroke-width="0.7"/><path d="M3 10.3V4.5L4.2 2.2L5.5 3.5V10.3Z" fill="#e4e4e4"/><path d="M4.2 4V10" stroke="#999" stroke-width="0.5"/><path d="M11 6.5V10M9.8 7.8L11 6.4L12.2 7.8" stroke="#7cc040" stroke-width="1.1" fill="none"/><text x="7.4" y="14.9" font-family="Liberation Sans" font-size="4.2" font-weight="bold" fill="#e8f4e0" text-anchor="middle" letter-spacing="-0.2">gbXML</text></svg>
<div class="t" style="left:276.7px;top:53.01px;font-size:6.1px;color:#3a3a4a;font-weight:bold;letter-spacing:-0.08px">Import from</div>
<div class="t" style="left:279.2px;top:58.91px;font-size:6.1px;color:#3a3a4a;font-weight:bold;letter-spacing:-0.12px">gbXML file</div>
<svg style="left:312.2px;top:33px" width="17.5" height="17" viewBox="0 0 17.5 17"><path d="M1 1H10.5L13 3.5V2H16.5V16H1Z" fill="none" stroke="#cfcfcf" stroke-width="1.3"/><path d="M4 16V10H9M13 10V13" stroke="#d8d8d8" stroke-width="0.9" fill="none"/></svg>
<div class="t" style="left:313px;top:52.91px;font-size:6.3px;color:#a6a6a6;font-weight:normal;">Room</div>
<svg style="left:319.1px;top:59.8px" width="3.2" height="2"><path d="M0 0H3.2L1.6 2Z" fill="#a0a0a0"/></svg>
<svg style="left:340.3px;top:33px" width="17" height="17" viewBox="0 0 17 17"><path d="M1 1H10.5L12.5 3.5V2H16V16H1Z" fill="none" stroke="#d0d0d0" stroke-width="1.3"/><rect x="4" y="6" width="9" height="5.5" fill="#e0e0e0" stroke="#cfcfcf" stroke-width="0.6"/></svg>
<div class="t" style="left:337.8px;top:52.91px;font-size:6.3px;color:#a6a6a6;font-weight:normal;letter-spacing:-0.05px">Symbols</div>
<div class="t" style="left:333.3px;top:58.81px;font-size:6.3px;color:#a6a6a6;font-weight:normal;letter-spacing:-0.02px">assignment</div>
<svg style="left:368px;top:33px" width="17" height="17" viewBox="0 0 17 17"><path d="M1.7 16.5V1.7H16.5" fill="none" stroke="#b4b4b4" stroke-width="3.4"/><path d="M1.7 16.5V1.7H16.5" fill="none" stroke="#dadada" stroke-width="1" stroke-dasharray="1 1"/></svg>
<div class="t" style="left:371px;top:52.91px;font-size:6.3px;color:#a6a6a6;font-weight:normal;">Wall</div>
<svg style="left:390px;top:33px" width="14" height="17" viewBox="0 0 14 17"><rect x="2.5" y="0.5" width="9" height="15.5" fill="#bcbcbc" stroke="#a8a8a8" stroke-width="0.8"/><path d="M0 16.4H14" stroke="#a0a0a0" stroke-width="1.2"/><path d="M9 8.5H10.5" stroke="#f0f0f0" stroke-width="0.8"/></svg>
<div class="t" style="left:390.5px;top:52.91px;font-size:6.3px;color:#a6a6a6;font-weight:normal;">Door</div>
<svg style="left:395.1px;top:59.8px" width="3.2" height="2"><path d="M0 0H3.2L1.6 2Z" fill="#a0a0a0"/></svg>
<svg style="left:409px;top:33px" width="17" height="17" viewBox="0 0 17 17"><path d="M0.5 9L8.2 1.5L16.5 9.5" fill="none" stroke="#b4b4b4" stroke-width="1.2"/><path d="M2.5 8.5V16H14V8.5" fill="none" stroke="#e0e0e0" stroke-width="0.8"/><circle cx="8.5" cy="11" r="1.8" fill="none" stroke="#d8d8d8" stroke-width="0.7"/><path d="M12.5 1.5L14 3.5M14 1.5L12.5 3.5" stroke="#a0a0a0" stroke-width="0.7"/></svg>
<div class="t" style="left:411px;top:52.91px;font-size:6.3px;color:#a6a6a6;font-weight:normal;">Roof</div>
<svg style="left:415.7px;top:59.8px" width="3.2" height="2"><path d="M0 0H3.2L1.6 2Z" fill="#a0a0a0"/></svg>
<svg style="left:434px;top:33px" width="17" height="17" viewBox="0 0 17 17"><path d="M2 8L8.5 1.5L15.5 10" fill="none" stroke="#b4b4b4" stroke-width="1.2"/><rect x="2" y="7" width="8" height="8" fill="none" stroke="#d0d0d0" stroke-width="0.9"/><path d="M6 7V15M2 11H10" stroke="#d0d0d0" stroke-width="0.7"/><path d="M12.5 1.5L14 3.5M14 1.5L12.5 3.5" stroke="#a0a0a0" stroke-width="0.7"/></svg>
<div class="t" style="left:436px;top:52.91px;font-size:6.3px;color:#a6a6a6;font-weight:normal;">Roof</div>
<div class="t" style="left:429px;top:58.81px;font-size:6.3px;color:#a6a6a6;font-weight:normal;">window</div>
<svg style="left:453.9px;top:59.8px" width="3.2" height="2"><path d="M0 0H3.2L1.6 2Z" fill="#a0a0a0"/></svg>
<svg style="left:465.3px;top:34px" width="16" height="16" viewBox="0 0 16 16"><path d="M8 0V16M0 8H16" stroke="#b0b0b0" stroke-width="0.9"/><path d="M8 3.5L3.5 8H8ZM8 8V12.5L12.5 8Z" fill="#b8b8b8"/></svg>
<div class="t" style="left:459.8px;top:52.91px;font-size:6.3px;color:#a6a6a6;font-weight:normal;letter-spacing:-0.1px">Reference</div>
<div class="t" style="left:466px;top:58.81px;font-size:6.3px;color:#a6a6a6;font-weight:normal;">point</div>
<svg style="left:494.6px;top:37px" width="17" height="8.5" viewBox="0 0 17 8.5"><path d="M0.5 0.5L6 5" stroke="#d0d0d0" stroke-width="0.7"/><rect x="6" y="2.3" width="10.5" height="5.5" fill="none" stroke="#cacaca" stroke-width="0.8"/><path d="M8.5 5.2H14" stroke="#d0d0d0" stroke-width="0.5" stroke-dasharray="0.8 0.8"/></svg>
<div class="t" style="left:496.7px;top:52.91px;font-size:6.3px;color:#a6a6a6;font-weight:normal;">Label</div>
<svg style="left:502.0px;top:59.8px" width="3.2" height="2"><path d="M0 0H3.2L1.6 2Z" fill="#a0a0a0"/></svg>
<svg style="left:515px;top:37px" width="9" height="8.5" viewBox="0 0 9 8.5"><rect x="0.5" y="0.5" width="8" height="7.5" fill="none" stroke="#c8c8c8" stroke-width="0.8"/><path d="M1 7.5L8 1" stroke="#c0c0c0" stroke-width="0.8"/><rect x="2" y="2" width="3" height="3" fill="#e0e0e0"/></svg>
<svg style="left:527px;top:37px" width="9" height="8.5" viewBox="0 0 9 8.5"><rect x="0.3" y="0.5" width="1.8" height="7.5" fill="#9c9c9c"/><path d="M2.5 1.5H8.5M2.5 3.3H8.5M2.5 5.1H8.5M2.5 6.9H8.5" stroke="#b8b8b8" stroke-width="0.9"/></svg>
<svg style="left:540px;top:37px" width="7.5" height="8.5" viewBox="0 0 7.5 8.5"><rect x="0.5" y="0.5" width="6.5" height="7.5" fill="none" stroke="#d8d8d8" stroke-width="0.7"/><path d="M1.5 2.5H6M1.5 4.3H6M1.5 6H6" stroke="#d8d8d8" stroke-width="0.6"/></svg>
<svg style="left:515px;top:53px" width="9" height="8" viewBox="0 0 9 8"><rect x="0.5" y="0.5" width="8" height="7" fill="none" stroke="#c4c4c4" stroke-width="0.8"/><path d="M3 5.5L3.8 2.5L4.6 5.5M5.5 2.5V5.5" stroke="#c8c8c8" stroke-width="0.5" fill="none"/></svg>
<svg style="left:527px;top:53px" width="8.5" height="8" viewBox="0 0 8.5 8"><rect x="0.5" y="0.5" width="7.5" height="7" fill="none" stroke="#c8c8c8" stroke-width="0.8"/><path d="M0.5 3H8M0.5 5.3H8M3 0.5V7.5M5.5 0.5V7.5" stroke="#d0d0d0" stroke-width="0.6"/></svg>
<svg style="left:2.5px;top:3.5px" width="8" height="9" viewBox="0 0 8 9"><path d="M4 0.5C5.5 2.5 7.3 4.3 7.3 6A3.3 3.1 0 0 1 0.7 6C0.7 4.3 2.5 2.5 4 0.5Z" fill="none" stroke="#3a90d8" stroke-width="1.1"/><circle cx="4" cy="5.8" r="1.3" fill="#3a90d8"/><path d="M5 7L7.2 8.5" stroke="#3a90d8" stroke-width="0.9"/></svg>
<svg style="left:17px;top:4px" width="9" height="7.5" viewBox="0 0 9 7.5"><path d="M2.5 4A3.2 3 0 1 1 5 7" fill="none" stroke="#bcbcbc" stroke-width="1.3"/><path d="M0.3 2L3.8 2L2.2 5.2Z" fill="#bcbcbc"/><path d="M0.5 7H3" stroke="#bcbcbc" stroke-width="0.8"/></svg>
<svg style="left:32px;top:4px" width="9" height="7.5" viewBox="0 0 9 7.5"><path d="M6.5 4A3.2 3 0 1 0 4 7" fill="none" stroke="#bcbcbc" stroke-width="1.3"/><path d="M8.7 2L5.2 2L6.8 5.2Z" fill="#bcbcbc"/><path d="M6 7H8.5" stroke="#bcbcbc" stroke-width="0.8"/></svg>
<svg style="left:47px;top:3px" width="9" height="9.5" viewBox="0 0 9 9.5"><rect x="0.3" y="0.3" width="8.4" height="8.9" rx="0.8" fill="#2260b8"/><rect x="1.7" y="0.8" width="5.6" height="3" fill="#d8e4f4"/><rect x="2.3" y="5.3" width="4.4" height="3.9" fill="#1a3060"/><rect x="3" y="6" width="1.2" height="2" fill="#c0d0e8"/></svg>
<svg style="left:62px;top:3px" width="9.5" height="9.5" viewBox="0 0 9.5 9.5"><path d="M0.3 4H3.5L4.5 5H9.2V9.2H0.3Z" fill="#e8b838"/><path d="M0.3 6H9.2V9.2H0.3Z" fill="#f4cc50"/><path d="M3 4Q4 1 7.5 1.3" stroke="#30a040" stroke-width="1.4" fill="none"/><path d="M6.5 0L8.5 1.3L6.8 3Z" fill="#30a040"/></svg>
<svg style="left:78px;top:3.5px" width="7" height="9" viewBox="0 0 7 9"><path d="M0.5 0.5H4.5L6.5 2.5V8.5H0.5Z" fill="#fafafa" stroke="#c8c8c8" stroke-width="0.8"/><path d="M4.5 0.5V2.5H6.5" fill="none" stroke="#c8c8c8" stroke-width="0.6"/></svg>
<svg style="left:816px;top:17.8px" width="8.5" height="11.7" viewBox="0 0 8.5 11.7"><path d="M4.2 0C5.5 3 8.3 5.3 8.3 7.8A4.1 3.9 0 0 1 0.1 7.8C0.1 5.3 3 3 4.2 0Z" fill="#1a7ad0"/><path d="M2 6.5Q2 9.5 4 10" stroke="#60b0f0" stroke-width="0.6" fill="none"/></svg>
<div class="t" style="left:826.5px;top:18.63px;font-size:7.9px;color:#585858;font-weight:bold;font-family:'Liberation Mono',monospace;transform:scaleY(1.28);transform-origin:0 50%;letter-spacing:-0.05px">INSTALSOFT</div>
<div class="t" style="left:827px;top:25.97px;font-size:2.5px;color:#b4b4b4;font-weight:normal;letter-spacing:0.12px">Easy and professional designing</div>
<div class="a" style="left:877.8px;top:18.9px;width:9px;height:9px;border-radius:50%;background:radial-gradient(circle at 40% 35%,#5aa8ff,#1050c8)"></div>
<div class="t" style="left:880.2px;top:19.72px;font-size:7.5px;color:#ffffff;font-weight:bold;">?</div>
<svg style="left:891.7px;top:21.8px" width="4.5" height="3" viewBox="0 0 4.5 3"><path d="M0.3 2.7L2.25 0.6L4.2 2.7" stroke="#404040" stroke-width="0.9" fill="none"/></svg>
<svg style="left:6.5px;top:82px" width="7" height="7.5" viewBox="0 0 7 7.5"><rect x="0.3" y="0.3" width="5.6" height="7" fill="#f4f0ea" stroke="#c8b8a0" stroke-width="0.5"/><path d="M1 4H4.5M1 5.5H4.5" stroke="#c0b0a0" stroke-width="0.5"/><path d="M1.5 1.5H5.5V3.8H2.5Z" fill="#e08848"/><rect x="5.5" y="1" width="1.3" height="2.8" fill="#111"/></svg>
</body></html>
